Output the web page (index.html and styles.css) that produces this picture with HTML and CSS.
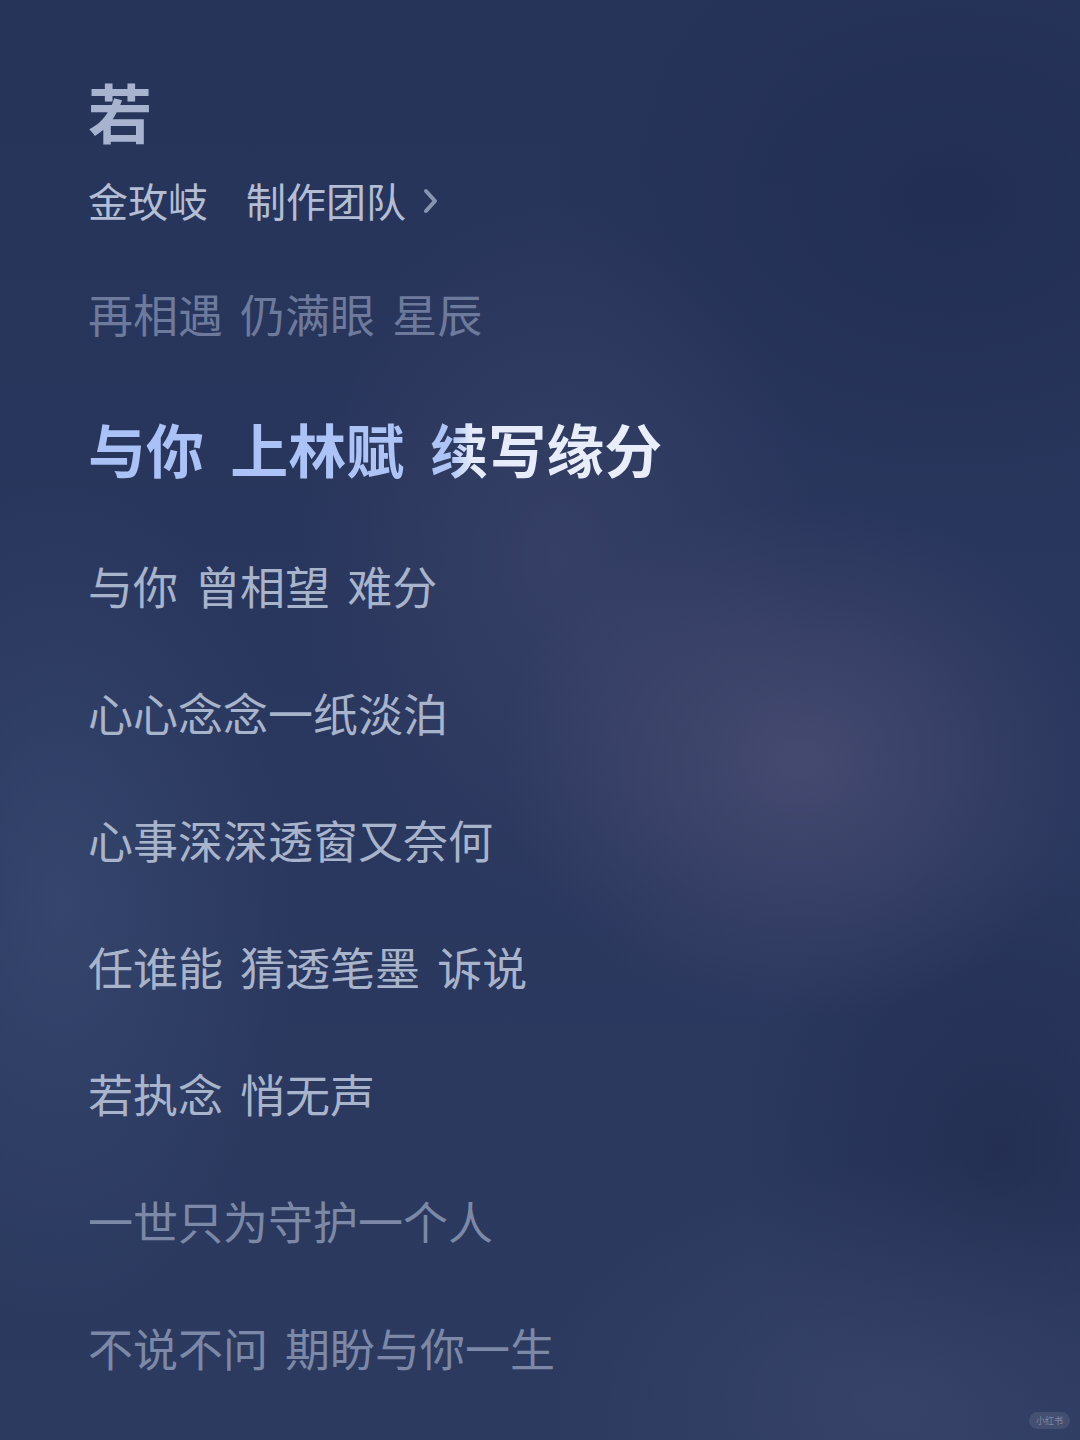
FILE: index.html
```
<html>
  <head>
    <meta charset="utf-8" />
    <meta name="viewport" content="width=device-width, user-scalable=no" />
    <link rel="stylesheet" href="styles.css">
  </head>
  <body>
    <div class="screen">
      <h1 class="song">若</h1>
      <div class="credits">
        <span class="artist">金玫岐</span>
        <span class="team">制作团队</span>
        <svg class="chevron" width="18" height="30" viewBox="0 0 18 30">
          <polyline points="4,5 13,15 4,25" fill="none" stroke="#8994b1" stroke-width="4" stroke-linecap="round" stroke-linejoin="round" />
        </svg>
      </div>

      <div class="lyrics">
        <p class="line past">再相遇 仍满眼 星辰</p>
        <p class="line current"><span class="sung">与你 上林赋 续写缘分</span></p>
        <p class="line">与你 曾相望 难分</p>
        <p class="line">心心念念一纸淡泊</p>
        <p class="line">心事深深透窗又奈何</p>
        <p class="line">任谁能 猜透笔墨 诉说</p>
        <p class="line">若执念 悄无声</p>
        <p class="line far">一世只为守护一个人</p>
        <p class="line far">不说不问 期盼与你一生</p>
      </div>

      <!-- little source tag in the corner -->
      <div class="tag">小红书</div>
    </div>
  </body>
</html>
```

FILE: styles.css
```
body {
  margin: 0;
  width: 1080px;
  height: 1440px;
  overflow: hidden;
  font-family: "Noto Sans CJK SC", "Noto Sans", sans-serif;
  background: #27345a;
}
.screen {
  position: relative;
  width: 1080px;
  height: 1440px;
  box-sizing: border-box;
  padding: 68px 0 0 88px;
  /* blurred album-art backdrop */
  background:
    radial-gradient(ellipse 300px 260px at 800px 760px, rgba(78, 80, 118, 0.75), rgba(78, 80, 118, 0) 100%),
    radial-gradient(ellipse 260px 360px at 560px 560px, rgba(70, 76, 112, 0.45), rgba(70, 76, 112, 0) 100%),
    radial-gradient(ellipse 240px 420px at 60px 900px, rgba(62, 80, 120, 0.55), rgba(62, 80, 120, 0) 100%),
    radial-gradient(ellipse 360px 240px at 900px 1400px, rgba(64, 74, 112, 0.55), rgba(64, 74, 112, 0) 100%),
    radial-gradient(ellipse 260px 300px at 1000px 1150px, rgba(30, 40, 74, 0.6), rgba(30, 40, 74, 0) 100%),
    radial-gradient(ellipse 400px 300px at 950px 200px, rgba(32, 44, 80, 0.7), rgba(32, 44, 80, 0) 100%),
    linear-gradient(180deg, #27345a 0%, #29365d 45%, #2c3a60 100%);
}
.song {
  margin: 0;
  font-size: 64px;
  line-height: 84px;
  font-weight: 700;
  color: #a7b3cf;
}
.credits {
  display: flex;
  align-items: center;
  margin-top: 18px;
  height: 60px;
  font-size: 40px;
  color: #b3bdd5;
}
.team {
  margin-left: 38px;
}
.chevron {
  margin-left: 16px;
  margin-top: 2px;
}
.lyrics {
  margin-top: 20px;
}
p.line {
  margin: 0;
  font-size: 45px;
  line-height: 127px;
  height: 127px;
  white-space: pre;
  word-spacing: 7px;
  color: #a8b3cc;
}
p.past {
  color: #6d7a9c;
}
p.far {
  color: #7c88a7;
}
p.current {
  margin: 8px 0 10px 0;
  font-size: 58px;
  font-weight: 700;
  word-spacing: 13px;
}
.sung {
  background: linear-gradient(90deg, #aac1f6 0, #aec4f6 362px, #e5ebf9 384px, #e9eefa 100%);
  -webkit-background-clip: text;
  background-clip: text;
  color: transparent;
}
.tag {
  position: absolute;
  right: 10px;
  bottom: 11px;
  padding: 1px 7px;
  border-radius: 9px;
  background: rgba(255, 255, 255, 0.09);
  font-size: 9px;
  line-height: 15px;
  color: rgba(200, 208, 226, 0.45);
}
```
